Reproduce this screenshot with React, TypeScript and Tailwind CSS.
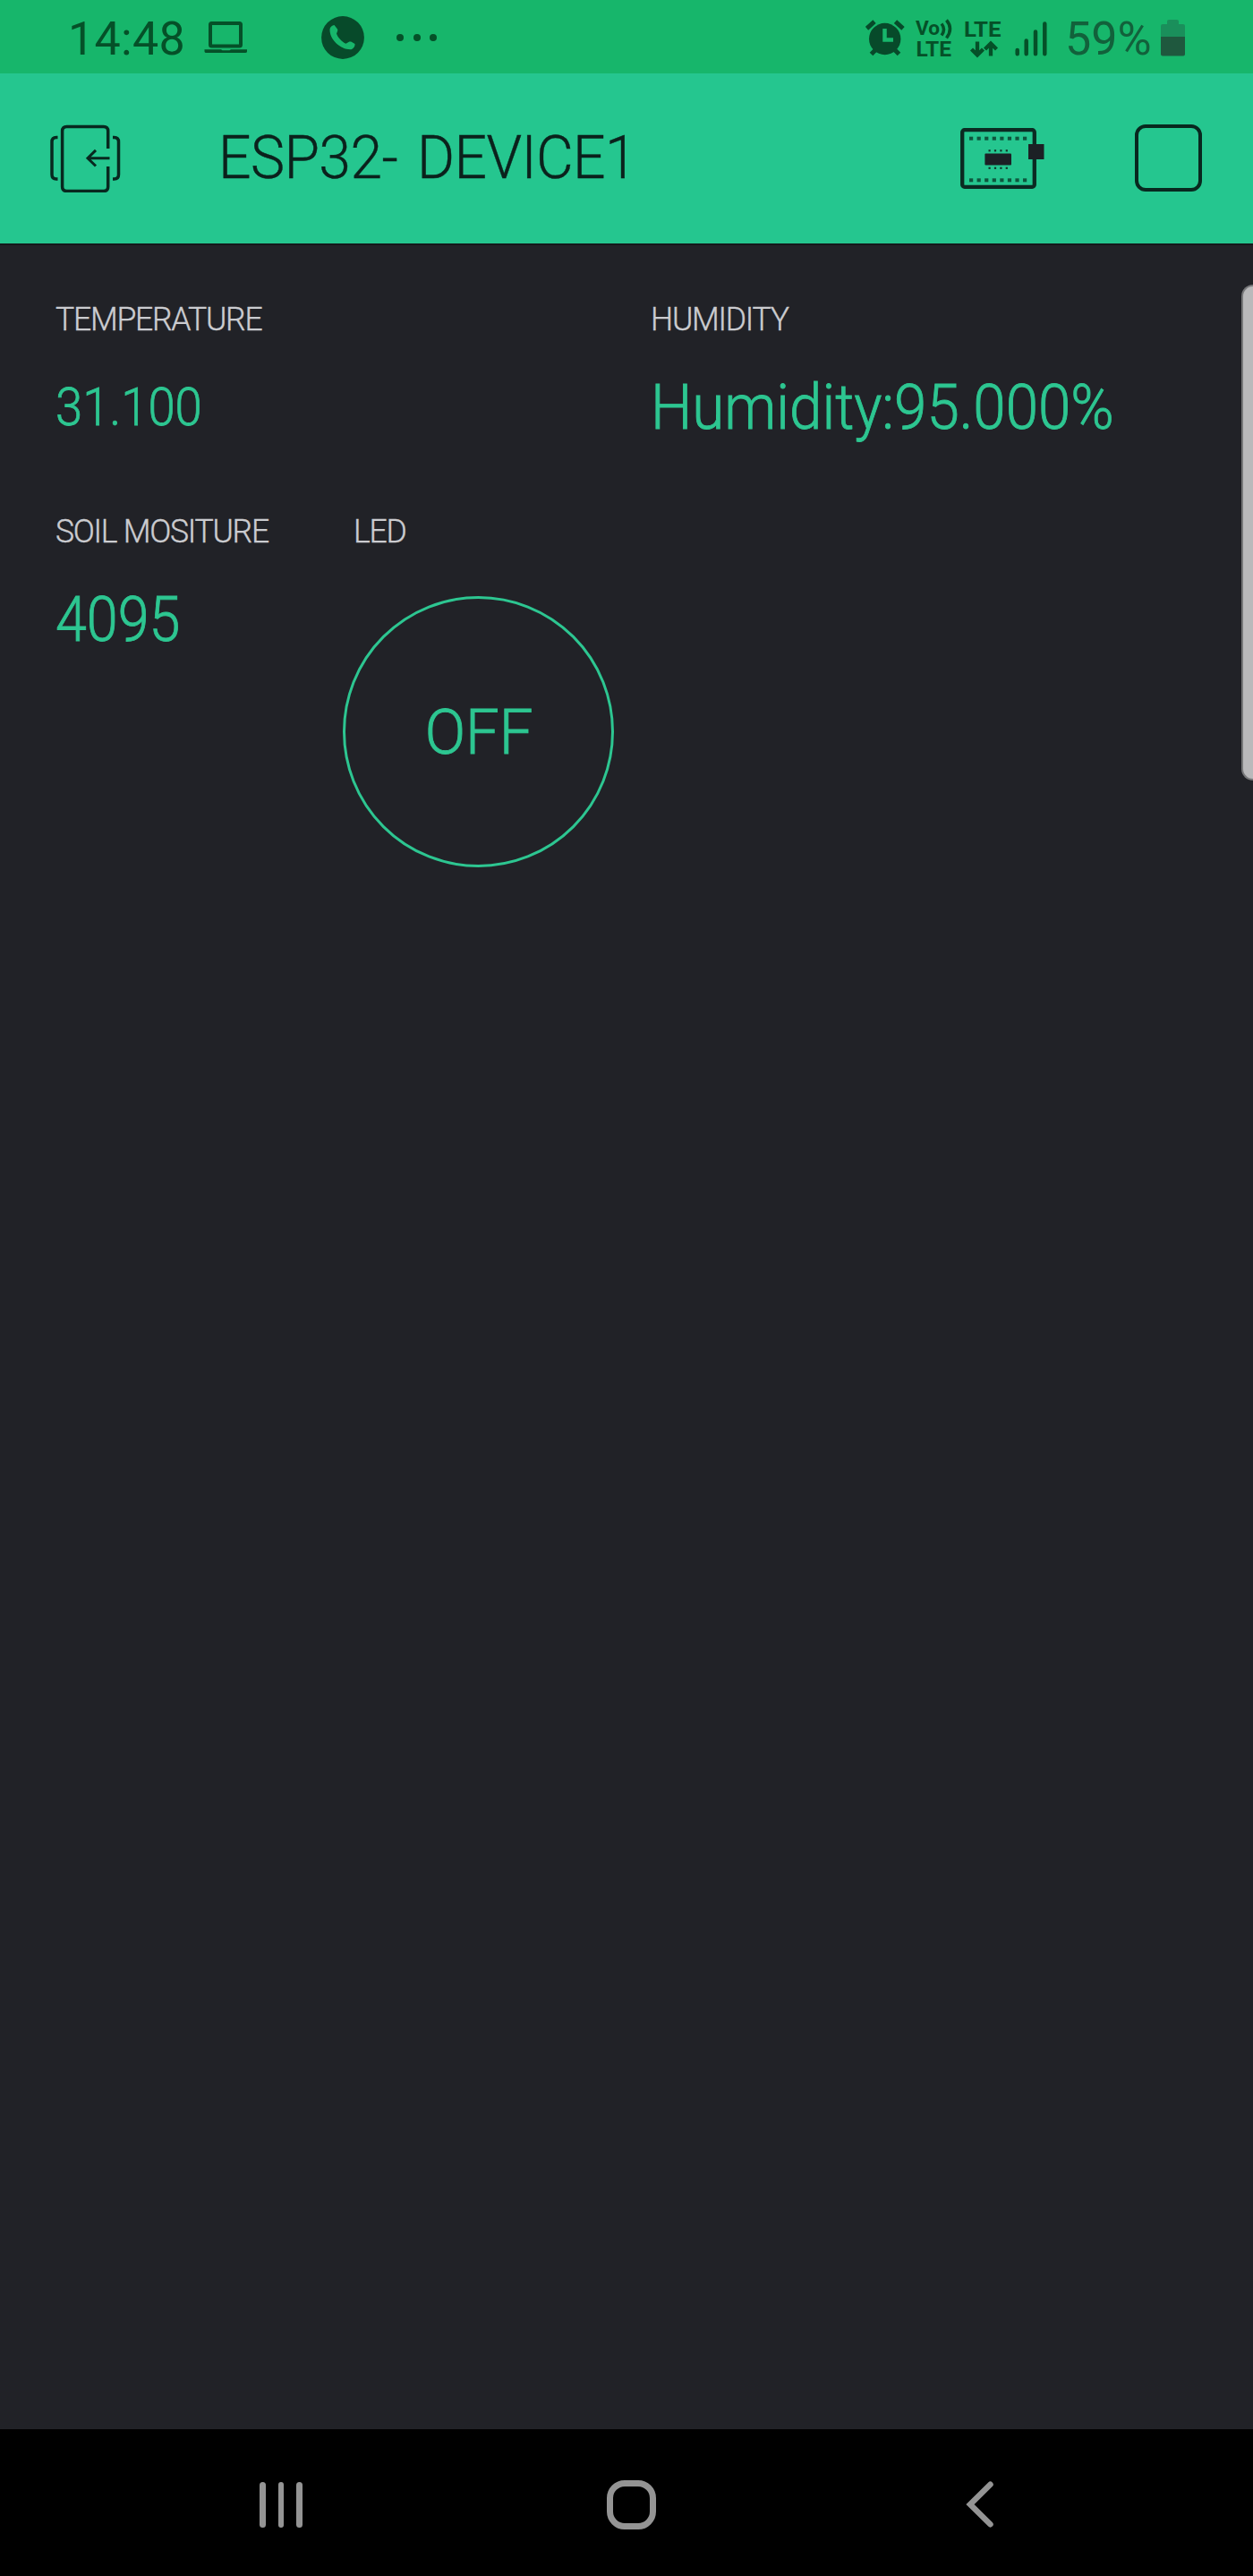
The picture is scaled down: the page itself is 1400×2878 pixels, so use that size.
import React, { ReactNode } from "react";

function LaptopIcon() {
  return (
    <svg className="ml-[24px] shrink-0" width="50" height="38" viewBox="0 0 50 38">
      <rect x="7" y="3" width="34" height="25.5" rx="1.5" fill="none" stroke="#055028" strokeWidth="4" />
      <path d="M0.5 32.2H19l1.5 1h8l1.5-1H48v2.3q0 1.5-2 1.5H2.500q-2 0-2-1.5Z" fill="#055028" />
    </svg>
  );
}

function PhoneIcon() {
  return (
    <svg className="ml-[81px] shrink-0" width="48" height="48" viewBox="0 0 48 48">
      <circle cx="24" cy="24" r="23.9" fill="#074a2a" />
      <path
        d="M9.5 14.500C10 12 12 10.500 14.500 10l3.500 4.500c.5 1 .3 2-.2 3l-.8 2c1.500 4.500 6 9.300 10.500 11.300l3-1.900c1-.6 2-.6 3.200-.2l3.800 2.300c.3 2.500-1.500 5.500-4 6.200C22 38 9 26.500 9.500 14.500Z"
        fill="#17b66b"
      />
    </svg>
  );
}

function AlarmIcon() {
  return (
    <svg className="shrink-0" width="44" height="42" viewBox="0 0 44 42">
      <g fill="none" stroke="#074a2a" strokeWidth="5">
        <path d="M1.5 10.8 10 3.2M42 10.8 33.5 3.2" />
        <path d="M13 33 6.5 39.5M31 33l6.5 6.5" />
      </g>
      <circle cx="21.7" cy="22.5" r="17.7" fill="#074a2a" />
      <path d="M21.500 11V23.500H31" fill="none" stroke="#17b66b" strokeWidth="4.5" />
    </svg>
  );
}

function VolteIcon() {
  return (
    <svg className="ml-[11px] shrink-0 overflow-visible font-['Roboto',sans-serif] font-bold" width="44" height="42" viewBox="0 0 44 42" fill="#055028">
      <text x="1" y="18.3" fontSize="22.5" textLength="27" lengthAdjust="spacingAndGlyphs">Vo</text>
      <path d="M30 5.500q5 6.300 0 13M35.500 1.500q8 9.500 0 20" fill="none" stroke="#055028" strokeWidth="3.5" />
      <text x="1.5" y="41.5" fontSize="24" textLength="39.5" lengthAdjust="spacingAndGlyphs">LTE</text>
    </svg>
  );
}

function LteIcon() {
  return (
    <svg className="ml-[11px] shrink-0 overflow-visible font-['Roboto',sans-serif] font-bold" width="42" height="42" viewBox="0 0 42 42" fill="#055028">
      <text x="0" y="19.5" fontSize="24.5" textLength="41.5" lengthAdjust="spacingAndGlyphs">LTE</text>
      <g fill="none" stroke="#055028" strokeWidth="4.3">
        <path d="M15 25.500V40M8.500 34 15 40.500 21.500 34" />
        <path d="M30 41.500V28M23.500 34 30 27.500 36.500 34" />
      </g>
    </svg>
  );
}

function SignalIcon() {
  return (
    <svg className="ml-[15px] shrink-0" width="38" height="42" viewBox="0 0 38 42">
      <path d="M2.700 35V39.300M12.700 24.500V39.300M23 14.500V39.300M33.300 5.500V39.300" stroke="#055028" strokeWidth="4.5" strokeLinecap="round" />
    </svg>
  );
}

function BatteryIcon() {
  return (
    <svg className="ml-[11px] shrink-0" width="27" height="42" viewBox="0 0 27 42">
      <path d="M7 3q0-2 2-2h9q2 0 2 2v3h5q2 0 2 2v12H0V8q0-2 2-2h5Z" fill="#1a8f5b" />
      <path d="M0 20H27V39.500q0 2-2 2H2q-2 0-2-2Z" fill="#1f583e" />
    </svg>
  );
}

function ExitIcon() {
  return (
    <svg className="shrink-0" width="80" height="76" viewBox="0 0 80 76" fill="none" stroke="#08281f" strokeWidth="3.5">
      <path d="M65.700 27V7.500q0-5-5-5H19.600q-5 0-5 5v62q0 5 5 5H60.700q5 0 5-5V47" />
      <path d="M9.500 14.600H8q-5 0-5 5V56q0 5 5 5H9.500M71 14.600h1.500q5 0 5 5V56q0 5-5 5H71" />
      <path d="M67.500 37.700H43M52 28.900 43 37.700l9 8.800" strokeWidth="3" />
    </svg>
  );
}

function BoardIcon() {
  const pins = [0, 1, 2, 3, 4, 5, 6, 7];
  return (
    <svg className="shrink-0" width="94" height="70" viewBox="0 0 94 70">
      <rect x="2.2" y="3.2" width="80.6" height="63.6" rx="2.5" fill="none" stroke="#0b2a22" strokeWidth="4.3" />
      {pins.map((i) => (
        <g key={i} fill="#0e573e">
          <rect x={10 + i * 8.57} y="10.7" width="4.2" height="4" />
          <rect x={10 + i * 8.57} y="57.3" width="4.2" height="4" />
        </g>
      ))}
      {pins.slice(0, 4).map((i) => (
        <g key={i} fill="#12352b">
          <rect x={31.5 + i * 6.4} y="25.2" width="2.2" height="2.2" />
          <rect x={31.5 + i * 6.4} y="44.7" width="2.2" height="2.2" />
        </g>
      ))}
      <rect x="27.4" y="29.5" width="29.6" height="13" rx="1" fill="#1c2025" />
      <rect x="76" y="19" width="17.5" height="17" fill="#1c2025" />
    </svg>
  );
}

function StatusBar() {
  return (
    <div className="flex h-[82px] items-center bg-[#17b66b] pl-[76px] pr-[76px] pt-[2px]">
      <span className="mt-[3px] w-[128px] whitespace-nowrap text-[52px] leading-none tracking-[0.3px] text-[#055028]">14:48</span>
      <LaptopIcon />
      <PhoneIcon />
      <div className="ml-[36px] flex gap-[10.5px]">
        <span className="size-2 rounded-full bg-[#055028]" />
        <span className="size-2 rounded-full bg-[#055028]" />
        <span className="size-2 rounded-full bg-[#055028]" />
      </div>
      <div className="ml-auto flex items-center">
        <AlarmIcon />
        <VolteIcon />
        <LteIcon />
        <SignalIcon />
        <span className="ml-[18px] mt-[3px] w-[96px] whitespace-nowrap text-[52px] leading-none text-[#12613b]">59%</span>
        <BatteryIcon />
      </div>
    </div>
  );
}

function AppBar() {
  return (
    <div className="flex h-[190px] items-center bg-[#25c68f] pb-[1px] pl-[55px] pr-[57px]">
      <ExitIcon />
      <h1 className="ml-[109px] origin-left scale-x-[0.958] whitespace-nowrap text-[67px] font-light leading-none tracking-[-0.6px] text-[#0b211c] [word-spacing:7px] [-webkit-text-stroke:0.4px]">
        ESP32- DEVICE1
      </h1>
      <div className="ml-auto flex items-center gap-[101px]">
        <BoardIcon />
        <div className="size-[75px] rounded-[12px] border-[4px] border-[#08281f]" />
      </div>
    </div>
  );
}

function Label({ children }: { children: ReactNode }) {
  return (
    <h2 className="origin-left scale-x-[0.960] whitespace-nowrap text-[37px] font-light leading-none tracking-[-1.3px] text-[#cbccd0] [-webkit-text-stroke:0.4px]">
      {children}
    </h2>
  );
}

function NavBar() {
  return (
    <div className="flex h-[164px] items-center justify-between bg-black px-[290px] pt-[4px]">
      <div className="flex gap-[14px]">
        <span className="h-[51px] w-[6.5px] rounded-full bg-[#949494]" />
        <span className="h-[51px] w-[6.5px] rounded-full bg-[#949494]" />
        <span className="h-[51px] w-[6.5px] rounded-full bg-[#949494]" />
      </div>
      <div className="mr-[6px] size-[55px] rounded-[20px] border-[7px] border-[#949494]" />
      <svg width="31" height="52" viewBox="0 0 31 52">
        <path d="M27.500 3.700 5 26 27.500 48.300" fill="none" stroke="#949494" strokeWidth="6.5" strokeLinecap="round" />
      </svg>
    </div>
  );
}

export default function App() {
  return (
    <div className="relative flex h-[2878px] w-[1400px] flex-col overflow-hidden bg-[#212227] font-['Roboto',sans-serif]">
      <StatusBar />
      <AppBar />

      <div className="grow border-t-2 border-[#15181b] pl-[62px] pt-[64px]">
        <div className="flex h-[237px]">
          <div className="w-[665px]">
            <Label>TEMPERATURE</Label>
            <p className="mt-[50px] origin-left scale-x-[0.906] whitespace-nowrap text-[60px] font-light leading-none text-[#2dc691] [-webkit-text-stroke:0.8px]">31.100</p>
          </div>
          <div>
            <Label>HUMIDITY</Label>
            <p className="mt-[44px] origin-left scale-x-[0.922] whitespace-nowrap text-[71px] font-light leading-none text-[#2dc691] [-webkit-text-stroke:0.9px]">
              Humidity:95.000%
            </p>
          </div>
        </div>
        <div className="flex">
          <div className="w-[321px]">
            <Label>SOIL MOSITURE</Label>
            <p className="mt-[44px] origin-left scale-x-[0.885] whitespace-nowrap text-[71px] font-light leading-none text-[#2dc691] [-webkit-text-stroke:0.9px]">4095</p>
          </div>
          <div>
            <div className="pl-[12px]">
              <Label>LED</Label>
            </div>
            <button className="mt-[54px] flex size-[303px] items-center justify-center rounded-full border-[3px] border-[#2dc691]">
              <span className="scale-x-[0.943] text-[71px] font-light leading-none text-[#2dc691] [-webkit-text-stroke:0.9px]">OFF</span>
            </button>
          </div>
        </div>
      </div>

      <NavBar />

      {/* edge panel handle */}
      <div className="absolute right-0 top-[318px] h-[554px] w-[13px] rounded-l-[13px] border-2 border-r-0 border-[#77787a] bg-[#b9b9bb]" />
    </div>
  );
}
